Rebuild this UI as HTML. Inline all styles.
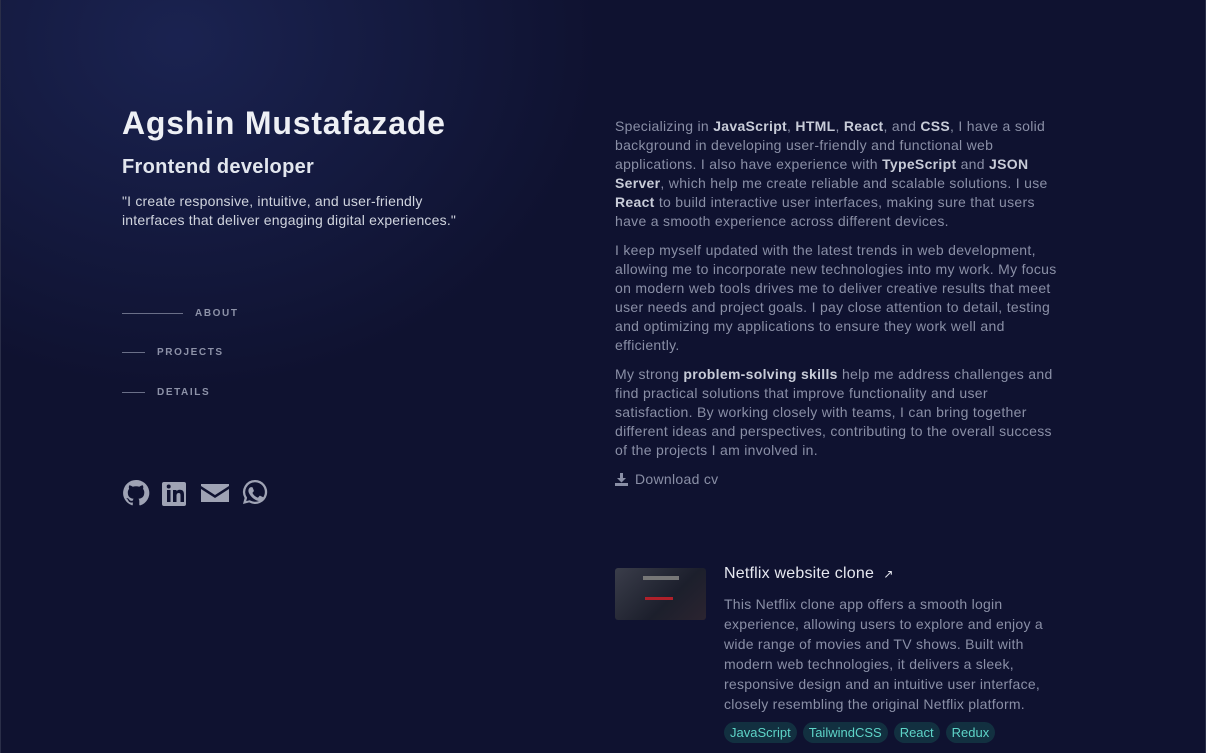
<!DOCTYPE html>
<html><head><meta charset="utf-8"><style>
*{margin:0;padding:0;box-sizing:border-box}
body{width:1206px;height:753px;overflow:hidden;background:#0f1230;font-family:"Liberation Sans",sans-serif;position:relative;
background:radial-gradient(600px 500px at 180px 40px,rgba(40,55,120,.45),transparent 70%),#0f1230;border-left:1px solid #2a2e48;border-right:1px solid #2a2e48}
.a{position:absolute;white-space:nowrap}
h1{font-size:32px;font-weight:bold;color:#eef0f5;left:121px;top:105px;letter-spacing:.8px}
h2{font-size:20px;font-weight:bold;color:#e2e6ee;left:121px;top:156px;letter-spacing:.3px}
.q{left:121px;top:192px;font-size:14px;line-height:19px;color:#d0d4de;letter-spacing:.2px}
.nav{left:121px;font-size:10px;letter-spacing:1.6px;font-weight:bold;color:#8d92a8;display:flex;align-items:center}
.nav i{display:inline-block;height:1px;background:#6a6f88;margin-right:12px}
.r{left:614px;font-size:14px;line-height:19px;color:#8a8fa6;letter-spacing:.3px}
.r p{margin-bottom:10px}
.r b{color:#c8ccd8}
.tag{display:inline-block;background:#123040;color:#5ed4c8;font-size:13px;border-radius:12px;padding:3px 6px;margin-right:6px}
</style></head><body>
<h1 class="a">Agshin Mustafazade</h1>
<h2 class="a">Frontend developer</h2>
<div class="a q">"I create responsive, intuitive, and user-friendly<br>interfaces that deliver engaging digital experiences."</div>
<div class="a nav" style="top:308px"><i style="width:61px"></i>ABOUT</div>
<div class="a nav" style="top:347px"><i style="width:23px"></i>PROJECTS</div>
<div class="a nav" style="top:387px"><i style="width:23px"></i>DETAILS</div>
<svg class="a" style="left:121px;top:478px" width="150" height="28" viewBox="0 0 150 28" fill="#9fa3b4">
<path d="M14 2a13 13 0 0 0-4.1 25.3c.6.1.9-.3.9-.6v-2.3c-3.6.8-4.4-1.6-4.4-1.6-.6-1.5-1.4-1.9-1.4-1.9-1.2-.8.1-.8.1-.8 1.3.1 2 1.3 2 1.3 1.2 2 3.1 1.4 3.8 1.1.1-.8.5-1.4.8-1.7-2.9-.3-5.9-1.4-5.9-6.4 0-1.4.5-2.6 1.3-3.5-.1-.3-.6-1.7.1-3.5 0 0 1.1-.3 3.6 1.3a12 12 0 0 1 6.5 0c2.5-1.7 3.6-1.3 3.6-1.3.7 1.8.3 3.1.1 3.5.8.9 1.3 2.1 1.3 3.5 0 5-3 6.1-5.9 6.4.5.4.9 1.2.9 2.4v3.6c0 .3.2.7.9.6A13 13 0 0 0 14 2z"/>
<path d="M42 4h20a2 2 0 0 1 2 2v20a2 2 0 0 1-2 2H42a2 2 0 0 1-2-2V6a2 2 0 0 1 2-2zm3 8v12h3.5V12zm1.7-5.5a2 2 0 1 0 0 4 2 2 0 0 0 0-4zM51 12v12h3.5v-6c0-1.6.4-3 2.3-3s1.7 1.9 1.7 3.1V24H62v-7c0-3.3-.8-5.3-4.3-5.3-1.7 0-2.7.9-3.2 1.6V12z"/>
<path d="M79 6h28v2l-14 9-14-9zm0 5l14 9 14-9v13H79z"/>
<path d="M133 2a12 12 0 0 0-10.4 18l-1.6 6 6.2-1.6A12 12 0 1 0 133 2zm0 2.2a9.8 9.8 0 1 1-5 18.2l-.4-.2-3.4.9.9-3.3-.2-.4A9.8 9.8 0 0 1 133 4.2zm-4.3 5c-.3 0-.7.1-1 .5-.4.4-1.3 1.3-1.3 3.1s1.3 3.6 1.5 3.9c.2.2 2.6 4 6.4 5.5 3.1 1.2 3.8 1 4.4.9.7-.1 2.2-.9 2.5-1.8.3-.9.3-1.6.2-1.8-.1-.2-.3-.3-.7-.5l-2.5-1.2c-.3-.1-.6-.2-.8.2l-1.1 1.4c-.2.2-.4.3-.8.1-.4-.2-1.5-.6-2.9-1.8-1.1-1-1.8-2.1-2-2.5-.2-.4 0-.6.2-.8l.6-.7c.2-.2.2-.4.4-.6.1-.3 0-.5 0-.7l-1.1-2.7c-.3-.7-.6-.6-.8-.6z"/>
</svg>
<div class="a r" style="top:117px">
<p>Specializing in <b>JavaScript</b>, <b>HTML</b>, <b>React</b>, and <b>CSS</b>, I have a solid<br>background in developing user-friendly and functional web<br>applications. I also have experience with <b>TypeScript</b> and <b>JSON</b><br><b>Server</b>, which help me create reliable and scalable solutions. I use<br><b>React</b> to build interactive user interfaces, making sure that users<br>have a smooth experience across different devices.</p>
<p>I keep myself updated with the latest trends in web development,<br>allowing me to incorporate new technologies into my work. My focus<br>on modern web tools drives me to deliver creative results that meet<br>user needs and project goals. I pay close attention to detail, testing<br>and optimizing my applications to ensure they work well and<br>efficiently.</p>
<p>My strong <b>problem-solving skills</b> help me address challenges and<br>find practical solutions that improve functionality and user<br>satisfaction. By working closely with teams, I can bring together<br>different ideas and perspectives, contributing to the overall success<br>of the projects I am involved in.</p>
<div style="margin-top:1px;display:flex;align-items:center"><svg width="13" height="13" viewBox="0 0 13 13" fill="#8a8fa6" style="margin-right:7px"><path d="M5 0h3v5h3L6.5 9.5 2 5h3zM0 10h13v3H0z"/></svg>Download cv</div>
</div>
<div class="a" style="left:614px;top:568px;width:91px;height:52px;background:linear-gradient(135deg,#3a3d4a,#1c1f2c 60%,#2b2430);border-radius:3px;overflow:hidden"><div style="position:absolute;left:30px;top:29px;width:28px;height:3px;background:#b0202a"></div><div style="position:absolute;left:28px;top:8px;width:36px;height:4px;background:#777"></div></div>
<div class="a" style="left:723px;top:565px;font-size:16px;color:#e6e8f0;letter-spacing:.2px">Netflix website clone &nbsp;<span style="font-size:12px">&#x2197;</span></div>
<div class="a" style="left:723px;top:594px;font-size:14px;line-height:20px;color:#8a8fa6;letter-spacing:.25px">This Netflix clone app offers a smooth login<br>experience, allowing users to explore and enjoy a<br>wide range of movies and TV shows. Built with<br>modern web technologies, it delivers a sleek,<br>responsive design and an intuitive user interface,<br>closely resembling the original Netflix platform.</div>
<div class="a" style="left:723px;top:722px"><span class="tag">JavaScript</span><span class="tag">TailwindCSS</span><span class="tag">React</span><span class="tag">Redux</span></div>
</body></html>
